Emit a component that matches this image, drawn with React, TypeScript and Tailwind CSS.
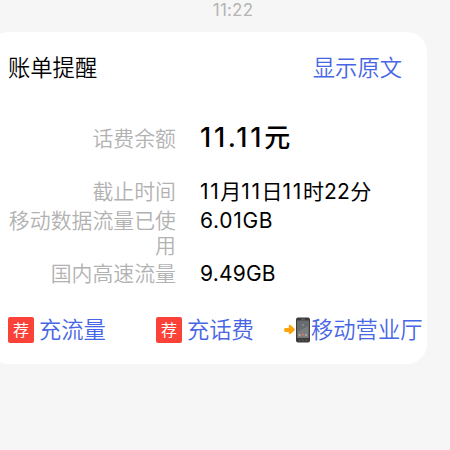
import type { ReactNode } from "react";

interface BillRowProps {
  label: string;
  children: ReactNode;
  className?: string;
}

function BillRow({ label, children, className = "" }: BillRowProps) {
  return (
    <div className={`flex items-start ${className}`}>
      <dt className="w-[168px] shrink-0 text-right text-[20.9px] leading-[25px] font-[350] text-[#b2b2b2]">
        {label}
      </dt>
      <dd className="ml-6 text-[21px] leading-[25px] whitespace-nowrap text-black">
        {children}
      </dd>
    </div>
  );
}

function RecommendBadge() {
  return (
    <span className="mr-[5px] flex size-[26px] shrink-0 items-center justify-center rounded-[2px] bg-[#fb4238] pb-px text-[16px] leading-none font-normal text-white">
      荐
    </span>
  );
}

function PhoneArrowIcon() {
  return (
    <svg width="27" height="26" viewBox="0 0 27 26" className="shrink-0">
      <path
        d="M1.4 11h3.4V9.2c0-1.3 1.2-1.8 2.1-.9l3.5 3.3c.6.6.6 1.3 0 1.9l-3.5 3.3c-.9.9-2.1.4-2.1-.9V15H1.4c-.7 0-1.2-.5-1.2-1.2v-1.6c0-.7.5-1.2 1.2-1.2z"
        fill="#fda40b"
      />
      <rect x="12" y="0.5" width="14" height="25" rx="2" fill="#3d3b39" />
      <rect x="13.3" y="3.7" width="11.4" height="17.2" fill="#7b7e80" />
      <path d="M13.3 3.7h11.4v5L13.3 15z" fill="#686c6f" />
      <rect x="17" y="1.7" width="4" height="0.8" rx="0.4" fill="#777b7e" />
      <circle cx="19" cy="8" r="1" fill="#8d9396" />
      <rect x="14.5" y="17" width="2" height="2" fill="#a9a9a6" />
      <rect x="17.8" y="16.5" width="2" height="2" fill="#d8776a" />
      <rect x="21" y="17" width="2" height="2" fill="#a9a39c" />
      <path d="M15 23.2h1.5M18.3 23.2h1.5M21.5 23.2H23" stroke="#75777a" strokeWidth="0.8" />
    </svg>
  );
}

export default function App() {
  return (
    <div className="h-[450px] w-[450px] overflow-hidden bg-[#f6f6f6] font-['Inter','Noto_Sans_CJK_SC',sans-serif]">
      <div className="flex h-8 justify-center pl-4 text-[17px] leading-[20px] tracking-[0.2px] text-[#b4b4b4]">
        11:22
      </div>

      <section className="-ml-3 h-[332px] w-[439px] rounded-[20px] bg-white pl-5">
        <header className="flex items-center justify-between pt-[22px] pr-[25px] text-[22.3px] leading-[28px] font-[350]">
          <h1 className="text-black">账单提醒</h1>
          <button type="button" className="text-[#4766e5]">
            显示原文
          </button>
        </header>

        <dl className="pt-[44px]">
          <BillRow label="话费余额">
            <span className="text-[26px] leading-[24px] font-medium">
              <span className="text-[27px] tracking-[2.7px]">11.11</span>元
            </span>
          </BillRow>
          <BillRow label="截止时间" className="mt-[27px]">
            <span className="tracking-[1.6px]">11</span>月
            <span className="tracking-[1.6px]">11</span>日
            <span className="tracking-[1.6px]">11</span>时
            <span className="tracking-[0.4px]">22</span>分
          </BillRow>
          <BillRow label="移动数据流量已使用" className="mt-[4px]">
            <span className="tracking-[0.7px]">6.01GB</span>
          </BillRow>
          <BillRow label="国内高速流量" className="mt-[3px]">
            <span className="tracking-[0.2px]">9.49GB</span>
          </BillRow>
        </dl>

        <nav className="mt-[31px] flex h-[26px] items-center text-[22.3px] leading-[26px] font-[350] whitespace-nowrap text-[#4766e5]">
          <a className="flex w-[148px] shrink-0 items-center">
            <RecommendBadge />
            充流量
          </a>
          <a className="flex w-[128px] shrink-0 items-center">
            <RecommendBadge />
            充话费
          </a>
          <a className="flex shrink-0 items-center">
            <PhoneArrowIcon />
            移动营业厅
          </a>
        </nav>
      </section>
    </div>
  );
}
